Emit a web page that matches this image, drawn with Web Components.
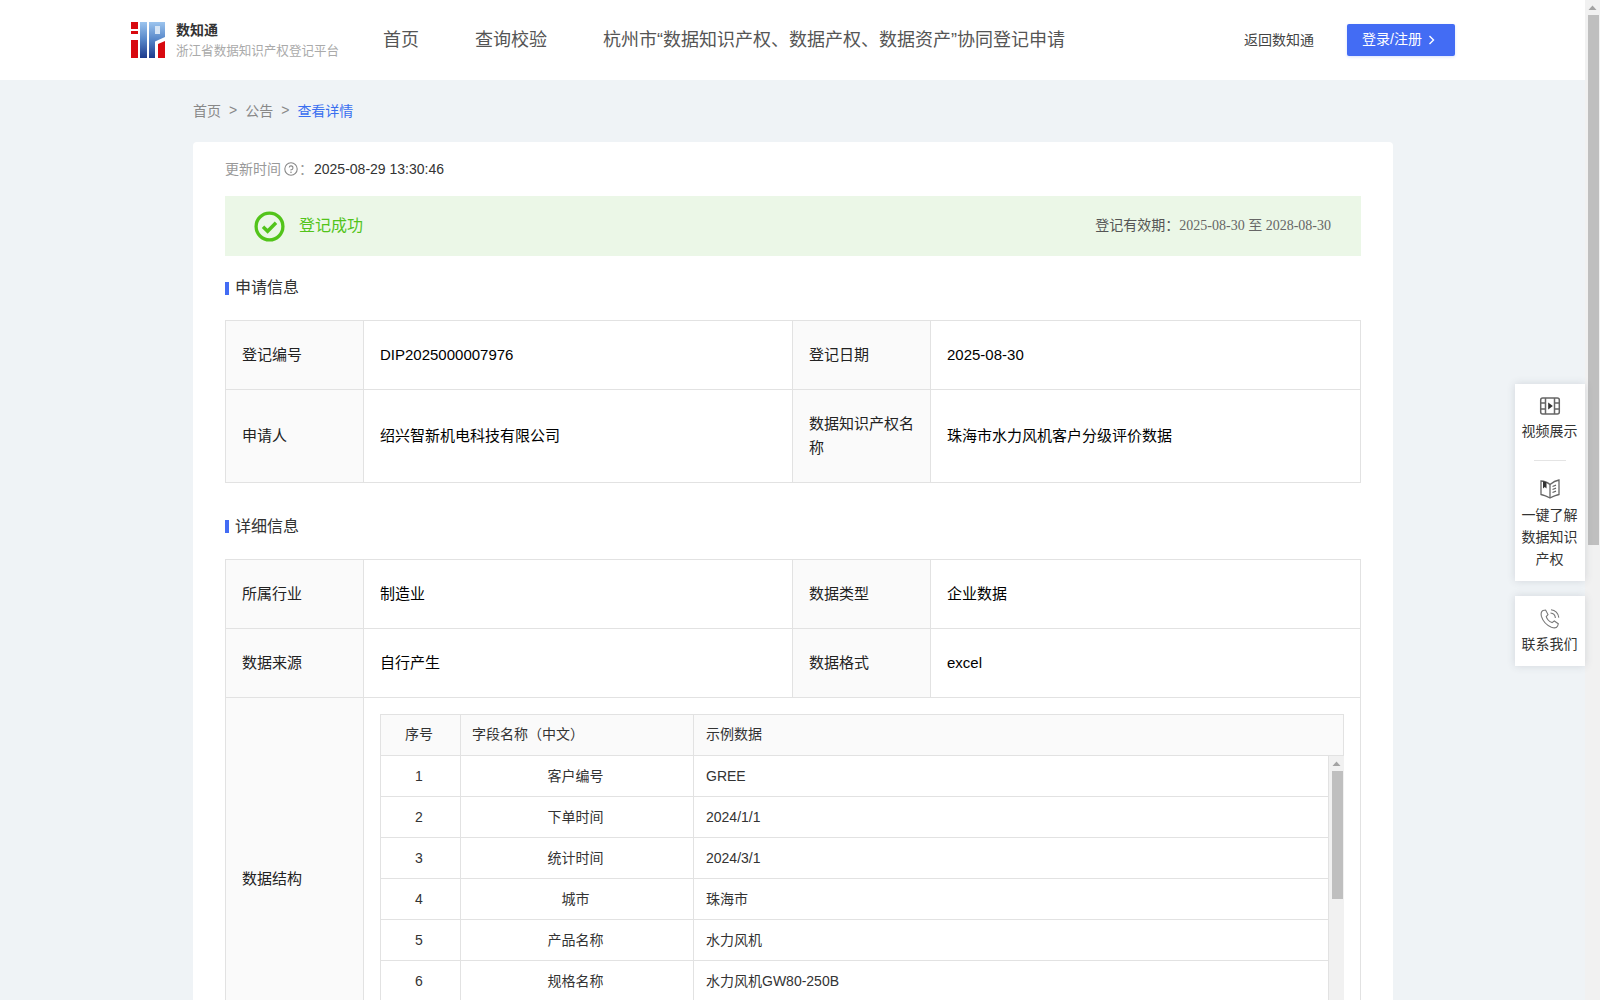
<!DOCTYPE html>
<html lang="zh-CN">
<head>
<meta charset="utf-8">
<title>数知通</title>
<style>
    html, body { margin: 0; height: 100%; overflow: hidden; background: #eff3f6; }
    body { font-family: "Liberation Sans", "Noto Sans CJK SC", sans-serif; font-size: 14px; }
</style>
</head>
<body>
<page-shell>
    <site-header></site-header>
    <main-content>
        <bread-crumb></bread-crumb>
        <detail-card>
            <update-time></update-time>
            <status-banner></status-banner>
            <section-title>申请信息</section-title>
            <apply-table></apply-table>
            <section-title second>详细信息</section-title>
            <detail-table></detail-table>
        </detail-card>
    </main-content>
    <side-float></side-float>
</page-shell>

<script>
const FONT = `"Liberation Sans", "Noto Sans CJK SC", sans-serif`;

class pageShell extends HTMLElement {
    constructor() {
        super();
        this.attachShadow({ mode: 'open' });
        this.shadowRoot.innerHTML = `
            <style>
                :host { display: flex; height: 1000px; width: 1600px; position: relative; overflow: hidden; }
                .view { width: 1585px; height: 1000px; overflow: hidden; flex: none; }
                .bar { width: 15px; flex: none; background: #f1f1f1; display: flex; flex-direction: column; align-items: center; }
                .arrow { height: 15px; flex: none; display: flex; align-items: center; justify-content: center; }
                .thumb { width: 11px; height: 530px; background: #bfbfbf; margin-left: 1px; }
            </style>
            <div class="view"><slot></slot></div>
            <div class="bar">
                <div class="arrow"><svg width="9" height="6" viewBox="0 0 9 6"><path d="M4.5 0.5 L8.5 5 H0.5 Z" fill="#a3a3a3"/></svg></div>
                <div class="thumb"></div>
            </div>
        `;
    }
}

class siteHeader extends HTMLElement {
    constructor() {
        super();
        this.attachShadow({ mode: 'open' });
        this.shadowRoot.innerHTML = `
            <style>
                :host { display: flex; align-items: center; height: 80px; background: #fff; box-sizing: border-box; padding: 0 130px 0 131px; font-family: ${FONT}; }
                .logo { display: flex; align-items: center; gap: 10px; width: 252px; flex: none; }
                .logo svg { display: block; }
                .name { font-size: 14px; font-weight: 700; color: #333; line-height: 18px; }
                .sub { font-size: 12.55px; color: #aaa; line-height: 18px; margin-top: 3px; white-space: nowrap; }
                nav { display: flex; gap: 56px; font-size: 18px; color: #555; flex: 1; white-space: nowrap; margin-top: -4px; }
                .back { font-size: 14px; color: #444; margin: -2px 33px 0 0; }
                .login { width: 108px; height: 32px; background: #436cf4; border-radius: 2px; color: #fff; font-size: 14px; display: flex; align-items: center; box-sizing: border-box; padding: 0 0 4px 15px; gap: 6px; box-shadow: 0 1px 3px rgba(67,108,244,.2); }
                .login svg { margin-top: 3px; }
            </style>
            <div class="logo">
                <svg width="35" height="36" viewBox="0 0 35 36">
                    <defs>
                        <linearGradient id="g" x1="0" y1="0" x2="0" y2="1">
                            <stop offset="0" stop-color="#9cc4ee"/>
                            <stop offset=".5" stop-color="#5585c8"/>
                            <stop offset="1" stop-color="#1d3a8c"/>
                        </linearGradient>
                    </defs>
                    <path d="M0 0h7v7H0z M0 9h7v3H0z M0 18h7v18H0z" fill="#d8090f"/>
                    <path d="M9 0h7v36H9z" fill="url(#g)"/>
                    <path d="M18 0h16v15L24 19.5v16.5h-6z" fill="url(#g)"/>
                    <path d="M24 4h5v8h-5z" fill="#d6e5f6"/>
                    <path d="M27 22l7-3v17h-7z" fill="#d8090f"/>
                </svg>
                <div>
                    <div class="name">数知通</div>
                    <div class="sub">浙江省数据知识产权登记平台</div>
                </div>
            </div>
            <nav>
                <span>首页</span>
                <span>查询校验</span>
                <span>杭州市“数据知识产权、数据产权、数据资产”协同登记申请</span>
            </nav>
            <span class="back">返回数知通</span>
            <div class="login">
                <span>登录/注册</span>
                <svg width="7" height="10" viewBox="0 0 7 10"><path d="M1.5 1 L5.5 5 L1.5 9" fill="none" stroke="#fff" stroke-width="1.4"/></svg>
            </div>
        `;
    }
}

class mainContent extends HTMLElement {
    constructor() {
        super();
        this.attachShadow({ mode: 'open' });
        this.shadowRoot.innerHTML = `
            <style>
                :host { display: block; padding: 0 192px 0 193px; font-family: ${FONT}; }
            </style>
            <slot></slot>
        `;
    }
}

class breadCrumb extends HTMLElement {
    constructor() {
        super();
        this.attachShadow({ mode: 'open' });
        this.shadowRoot.innerHTML = `
            <style>
                :host { display: flex; align-items: center; height: 62px; box-sizing: border-box; padding-bottom: 2px; font-size: 14px; color: #888; gap: 8px; }
                .now { color: #3a6ff0; }
            </style>
            <span>首页</span><span>&gt;</span><span>公告</span><span>&gt;</span><span class="now">查看详情</span>
        `;
    }
}

class detailCard extends HTMLElement {
    constructor() {
        super();
        this.attachShadow({ mode: 'open' });
        this.shadowRoot.innerHTML = `
            <style>
                :host { display: block; width: 1200px; box-sizing: border-box; background: #fff; border-radius: 4px; padding: 0 32px; }
            </style>
            <slot></slot>
        `;
    }
}

class updateTime extends HTMLElement {
    constructor() {
        super();
        this.attachShadow({ mode: 'open' });
        this.shadowRoot.innerHTML = `
            <style>
                :host { display: flex; align-items: center; height: 54px; font-size: 14px; color: #333; }
                .k { color: #999; }
                .k.name { margin-top: -2px; }
                svg { margin: 0 1px 0 3px; }
                .colon { width: 15px; color: #999; margin-top: -2px; }
            </style>
            <span class="k name">更新时间</span>
            <svg width="14" height="14" viewBox="0 0 14 14">
                <circle cx="7" cy="7" r="6.2" fill="none" stroke="#888" stroke-width="1.1"/>
                <path d="M5.2 5.5 A1.9 1.9 0 1 1 7 7.7 V8.5" fill="none" stroke="#888" stroke-width="1.1"/>
                <circle cx="7" cy="10.2" r=".8" fill="#888"/>
            </svg>
            <span class="colon">：</span>
            <span>2025-08-29 13:30:46</span>
        `;
    }
}

class statusBanner extends HTMLElement {
    constructor() {
        super();
        this.attachShadow({ mode: 'open' });
        this.shadowRoot.innerHTML = `
            <style>
                :host { display: flex; align-items: center; height: 60px; background: #ebf7e7; box-sizing: border-box; padding: 0 30px 0 29px; }
                .ok { font-size: 16px; color: #52c41a; margin: -4px 0 0 14px; flex: 1; }
                .term { font-size: 14px; color: #555; margin-top: -5px; }
                .term b { font-weight: 400; font-family: "Liberation Serif", "Noto Sans CJK SC", serif; color: #666; }
            </style>
            <svg width="31" height="31" viewBox="0 0 31 31">
                <circle cx="15.5" cy="15.5" r="13.4" fill="none" stroke="#52c41a" stroke-width="3.3"/>
                <path d="M9 15.8 L13.6 20.2 L22 11.8" fill="none" stroke="#52c41a" stroke-width="3.5"/>
            </svg>
            <span class="ok">登记成功</span>
            <span class="term">登记有效期：<b>2025-08-30 至 2028-08-30</b></span>
        `;
    }
}

class sectionTitle extends HTMLElement {
    constructor() {
        super();
        this.attachShadow({ mode: 'open' });
        this.shadowRoot.innerHTML = `
            <style>
                :host { display: flex; align-items: center; gap: 6px; height: 24px; margin: 19px 0 21px; font-size: 16px; color: #333; }
                :host([second]) { margin: 30px 0 22px; }
                i { display: block; width: 4px; height: 13px; background: #436cf4; margin-top: 2px; }
                span { margin-top: -2px; }
                :host([second]) span { margin-top: 0; }
            </style>
            <i></i><span><slot></slot></span>
        `;
    }
}

const TABLE_STYLE = `
    :host { display: block; font-size: 15px; color: #000; }
    table { border-collapse: collapse; width: 1136px; table-layout: fixed; }
    td { border: 1px solid #e2e2e2; padding: 0 16px 1px; line-height: 24px; height: 69px; box-sizing: border-box; }
    td.k { background: #fafafa; color: #222; }
`;
const COLS = `<colgroup><col style="width:138px"><col style="width:429px"><col style="width:138px"><col></colgroup>`;

class applyTable extends HTMLElement {
    constructor() {
        super();
        this.attachShadow({ mode: 'open' });
        this.shadowRoot.innerHTML = `
            <style>${TABLE_STYLE}
                .tall td { height: 93px; }
            </style>
            <table>${COLS}
                <tr>
                    <td class="k">登记编号</td><td>DIP2025000007976</td>
                    <td class="k">登记日期</td><td>2025-08-30</td>
                </tr>
                <tr class="tall">
                    <td class="k">申请人</td><td>绍兴智新机电科技有限公司</td>
                    <td class="k">数据知识产权名称</td><td>珠海市水力风机客户分级评价数据</td>
                </tr>
            </table>
        `;
    }
}

class detailTable extends HTMLElement {
    constructor() {
        super();
        this.attachShadow({ mode: 'open' });
        this.shadowRoot.innerHTML = `
            <style>${TABLE_STYLE}</style>
            <table>${COLS}
                <tr>
                    <td class="k">所属行业</td><td>制造业</td>
                    <td class="k">数据类型</td><td>企业数据</td>
                </tr>
                <tr>
                    <td class="k">数据来源</td><td>自行产生</td>
                    <td class="k">数据格式</td><td>excel</td>
                </tr>
                <tr>
                    <td class="k">数据结构</td>
                    <td colspan="3" style="padding:16px"><field-table></field-table></td>
                </tr>
            </table>
        `;
    }
}

class fieldTable extends HTMLElement {
    constructor() {
        super();
        this.attachShadow({ mode: 'open' });
        const rows = [
            ['1', '客户编号', 'GREE'],
            ['2', '下单时间', '2024/1/1'],
            ['3', '统计时间', '2024/3/1'],
            ['4', '城市', '珠海市'],
            ['5', '产品名称', '水力风机'],
            ['6', '规格名称', '水力风机GW80-250B'],
        ];
        this.shadowRoot.innerHTML = `
            <style>
                :host { display: block; width: 964px; font-size: 14px; color: #333; border: 1px solid #e2e2e2; box-sizing: border-box; }
                .row { display: grid; grid-template-columns: 80px 233px 1fr; height: 41px; box-sizing: border-box; border-bottom: 1px solid #e2e2e2; align-items: stretch; }
                .row > span { display: flex; align-items: center; border-right: 1px solid #e2e2e2; padding: 0 12px 0 11px; }
                .row > span:last-child { border-right: 0; padding-left: 12px; }
                .c { justify-content: center; }
                .row > .c { padding: 0 13px 0 10px; }
                .head { background: #fafafa; }
                .head > span { padding-bottom: 2px !important; }
                .scroll { display: flex; height: 287px; margin-right: -1px; }
                .body { flex: 1; overflow: hidden; }
                .bar { width: 16px; flex: none; background: #f1f1f1; border-left: 1px solid #e2e2e2; box-sizing: border-box; display: flex; flex-direction: column; align-items: center; }
                .arrow { height: 15px; display: flex; align-items: center; justify-content: center; flex: none; }
                .thumb { width: 11px; height: 128px; background: #bfbfbf; margin-left: 1px; }
            </style>
            <div class="row head"><span class="c">序号</span><span>字段名称（中文）</span><span>示例数据</span></div>
            <div class="scroll">
                <div class="body">
                    ${rows.map(r => `<div class="row"><span class="c">${r[0]}</span><span class="c">${r[1]}</span><span>${r[2]}</span></div>`).join('')}
                </div>
                <div class="bar">
                    <div class="arrow"><svg width="9" height="6" viewBox="0 0 9 6"><path d="M4.5 0.5 L8.5 5 H0.5 Z" fill="#a3a3a3"/></svg></div>
                    <div class="thumb"></div>
                </div>
            </div>
        `;
    }
}

class sideFloat extends HTMLElement {
    constructor() {
        super();
        this.attachShadow({ mode: 'open' });
        this.shadowRoot.innerHTML = `
            <style>
                :host { position: absolute; left: 1515px; top: 384px; width: 70px; display: flex; flex-direction: column; gap: 15px; font-family: ${FONT}; font-size: 14px; color: #333; line-height: 22px; text-align: center; }
                .box { background: #fff; box-shadow: 0 0 8px rgba(60,70,90,.16); padding: 12px 5px 0 4px; box-sizing: border-box; }
                .one { height: 197px; }
                .two { height: 70px; }
                svg { display: block; margin: 0 auto 4px; }
                .two svg { margin-bottom: 3px; }
                hr { border: 0; height: 1px; background: #e4e4e4; width: 32px; margin: 18px auto 17px; }
            </style>
            <div class="box one">
                <svg width="22" height="20" viewBox="0 0 22 20" fill="none" stroke="#666" stroke-width="1.5">
                    <rect x="1.7" y="2" width="18.6" height="16" rx="2"/>
                    <path d="M6.5 2v16 M15.5 2v16 M2 7h4.5 M2 13h4.5 M15.5 7h4.5 M15.5 13h4.5"/>
                    <path d="M9.2 6.5 L13.8 10 L9.2 13.5 Z" fill="#333" stroke="none"/>
                </svg>
                <div>视频展示</div>
                <hr>
                <svg width="22" height="22" viewBox="0 0 22 22" fill="none" stroke="#666" stroke-width="1.3">
                    <path d="M2 3 C5 3 8 4 11 6.5 C14 4 17 2.5 20 2 V16.5 C17 17 14 18.5 11 20 C8 18.5 5 17 2 16.5 Z"/>
                    <path d="M11 6.5 V20 M13.5 8.5 L17 7.2 M13.5 11.5 L17 10.2 M13.5 14.5 L17 13.2"/>
                    <path d="M4 3.2 L7.5 4.3 V10.5 L5.8 9 L4 10.5 Z" fill="#333" stroke="none"/>
                </svg>
                <div>一键了解数据知识产权</div>
            </div>
            <div class="box two">
                <svg width="22" height="22" viewBox="0 0 22 22" fill="none" stroke="#777" stroke-width="1.1">
                    <path d="M4 2.5 L6.6 2 L9 6.6 L7.2 8.6 C8 11 10.5 13.6 13 14.6 L15.3 13 L19.3 15.8 L18.6 18 C17.6 20 15 20.2 12.4 19.2 C7.6 17.2 3.8 12.8 2.4 8.4 C1.8 6 2.2 3.6 4 2.5 Z"/>
                    <path d="M11.5 5 C14.2 5.2 16.2 7.4 16.4 10 M12 1.8 C16.2 2 19.4 5.4 19.8 9.6"/>
                </svg>
                <div>联系我们</div>
            </div>
        `;
    }
}

customElements.define('page-shell', pageShell);
customElements.define('site-header', siteHeader);
customElements.define('main-content', mainContent);
customElements.define('bread-crumb', breadCrumb);
customElements.define('detail-card', detailCard);
customElements.define('update-time', updateTime);
customElements.define('status-banner', statusBanner);
customElements.define('section-title', sectionTitle);
customElements.define('apply-table', applyTable);
customElements.define('detail-table', detailTable);
customElements.define('field-table', fieldTable);
customElements.define('side-float', sideFloat);
</script>
</body>
</html>
